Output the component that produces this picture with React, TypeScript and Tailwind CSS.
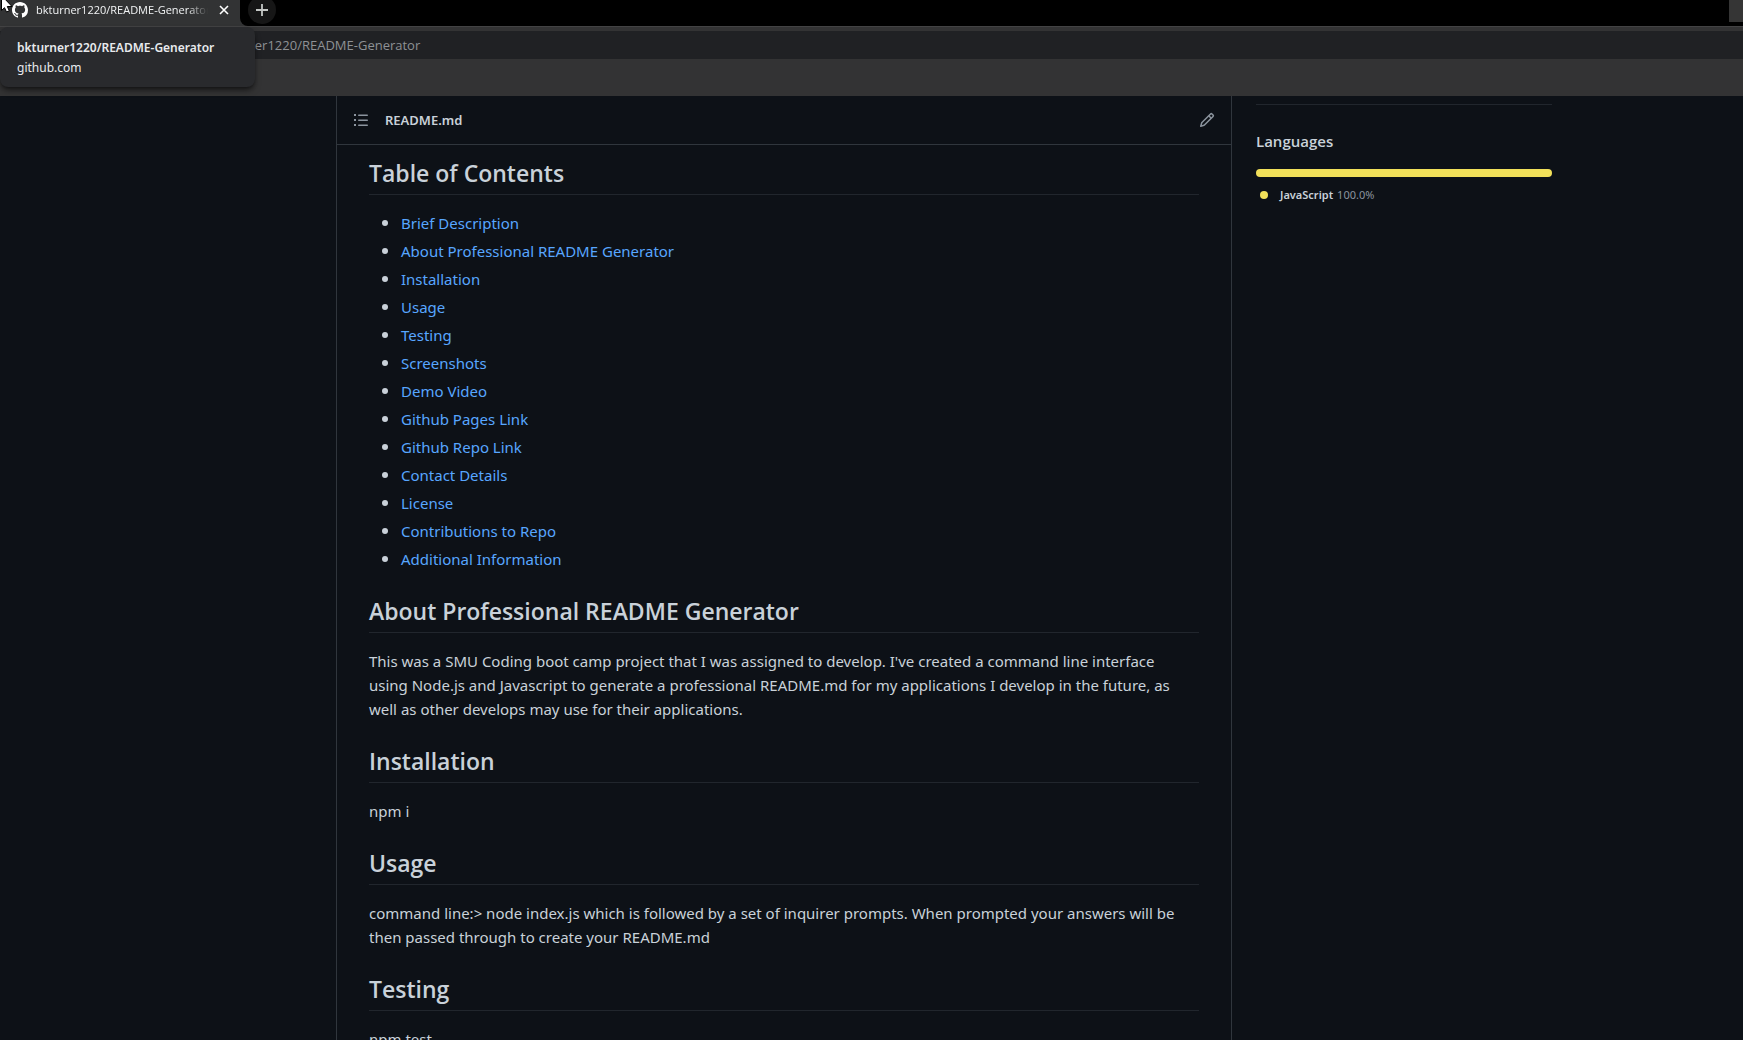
import React from 'react';

const contents = [
  'Brief Description',
  'About Professional README Generator',
  'Installation',
  'Usage',
  'Testing',
  'Screenshots',
  'Demo Video',
  'Github Pages Link',
  'Github Repo Link',
  'Contact Details',
  'License',
  'Contributions to Repo',
  'Additional Information',
];

const slug = (title: string) => title.toLowerCase().replace(/ /g, '-');

function GitHubMark() {
  return (
    <svg viewBox="0 0 16 16" className="size-4 shrink-0" fill="#fff" aria-hidden="true">
      <path d="M8 0C3.58 0 0 3.58 0 8c0 3.54 2.29 6.53 5.47 7.59.4.07.55-.17.55-.38 0-.19-.01-.82-.01-1.49-2.01.37-2.53-.49-2.69-.94-.09-.23-.48-.94-.82-1.13-.28-.15-.68-.52-.01-.53.63-.01 1.08.58 1.23.82.72 1.21 1.87.87 2.33.66.07-.52.28-.87.51-1.07-1.78-.2-3.64-.89-3.64-3.95 0-.87.31-1.59.82-2.15-.08-.2-.36-1.02.08-2.12 0 0 .67-.21 2.2.82.64-.18 1.32-.27 2-.27s1.36.09 2 .27c1.53-1.04 2.2-.82 2.2-.82.44 1.1.16 1.92.08 2.12.51.56.82 1.27.82 2.15 0 3.07-1.87 3.75-3.65 3.95.29.25.54.73.54 1.48 0 1.07-.01 1.93-.01 2.2 0 .21.15.46.55.38A8.01 8.01 0 0 0 16 8c0-4.42-3.58-8-8-8Z" />
    </svg>
  );
}

function ListIcon() {
  return (
    <svg viewBox="0 0 16 16" className="size-4" fill="currentColor" aria-hidden="true">
      <path d="M1 2h2v2H1zM1 7h2v2H1zM1 12h2v2H1z" />
      <path d="M5.75 2.5a.75.75 0 0 0 0 1.5h8.5a.75.75 0 0 0 0-1.5h-8.5Zm0 5a.75.75 0 0 0 0 1.5h8.5a.75.75 0 0 0 0-1.5h-8.5Zm0 5a.75.75 0 0 0 0 1.5h8.5a.75.75 0 0 0 0-1.5h-8.5Z" />
    </svg>
  );
}

function PencilIcon() {
  return (
    <svg viewBox="0 0 16 16" className="size-4" fill="currentColor" aria-hidden="true">
      <path d="M11.013 1.427a1.75 1.75 0 0 1 2.474 0l1.086 1.086a1.75 1.75 0 0 1 0 2.474l-8.61 8.61c-.21.21-.47.364-.756.445l-3.251.93a.75.75 0 0 1-.927-.928l.929-3.25c.081-.286.235-.547.445-.758l8.61-8.61Zm1.414 1.06a.25.25 0 0 0-.354 0L10.811 3.75l1.439 1.44 1.263-1.263a.25.25 0 0 0 0-.354l-1.086-1.086ZM11.189 6.25 9.75 4.81l-6.286 6.287a.25.25 0 0 0-.064.108l-.558 1.953 1.953-.558a.249.249 0 0 0 .108-.064l6.286-6.286Z" />
    </svg>
  );
}

function BrowserChrome() {
  return (
    <header className="relative z-10 bg-[#333334]">
      <div className="flex h-[26px] bg-[#323334]">
        <div className="flex h-[26px] w-60 items-start pl-3 pr-2">
          <div className="flex h-5 min-w-0 flex-1 items-center gap-2">
            <GitHubMark />
            <span className="min-w-0 flex-1 overflow-hidden whitespace-nowrap font-['Open_Sans'] text-[11px] text-[#f1f3f4] [mask-image:linear-gradient(to_right,black_88%,transparent)]">
              bkturner1220/README-Generator
            </span>
            <button aria-label="Close tab" className="flex size-4 items-center justify-center text-white">
              <svg viewBox="0 0 10 10" className="size-[10px]" stroke="currentColor" strokeWidth="1.6" aria-hidden="true">
                <path d="M1 1l8 8M9 1L1 9" />
              </svg>
            </button>
          </div>
        </div>
        <div className="flex flex-1 items-start justify-between rounded-bl-lg bg-black pl-2">
          <button aria-label="New tab" className="-mt-1 flex size-7 items-center justify-center rounded-full bg-[#161616] text-[#c4c7c5]">
            <svg viewBox="0 0 12 12" className="size-3" stroke="currentColor" strokeWidth="1.8" aria-hidden="true">
              <path d="M6 0v12M0 6h12" />
            </svg>
          </button>
          <span className="h-[22px] w-[14px] bg-[#353535]" />
        </div>
      </div>
      <div className="h-[70px] border-t border-[#434344] pt-1">
        <input
          aria-label="Address"
          readOnly
          defaultValue="github.com/bkturner1220/README-Generator"
          className="h-7 w-full bg-[#202124] pl-[141px] font-['Open_Sans'] text-[13px] text-[#8e9195] outline-none"
        />
      </div>
      <div role="tooltip" className="absolute left-0 top-[27px] h-[60px] w-[255px] rounded-lg bg-[#292a2d] pl-[17px] pt-[11px] text-[12px] leading-5 text-[#e8eaed] shadow-md shadow-black/50">
        <p className="font-semibold">bkturner1220/README-Generator</p>
        <p>github.com</p>
      </div>
      <svg viewBox="0 0 14 14" className="absolute left-0 top-0 size-[14px]" fill="#fff" stroke="#000" strokeWidth="1" aria-hidden="true">
        <path d="M1.500-3v13.500l3-2.800 2 4.300 2.800-1.200-2-4.300h4.700L3-3Z" />
      </svg>
    </header>
  );
}

function Heading({ children }: { children: string }) {
  return (
    <h2 id={slug(children)} className="mb-4 border-b border-[#21262d] pb-[5px] font-['Open_Sans'] text-[23px] font-semibold leading-8">
      {children}
    </h2>
  );
}

function Section({ title, children }: { title: string; children: React.ReactNode }) {
  return (
    <section className="mb-6">
      <Heading>{title}</Heading>
      {children}
    </section>
  );
}

export default function App() {
  return (
    <div className="flex h-screen flex-col overflow-hidden bg-[#0d1117] font-['Noto_Sans','Open_Sans',sans-serif] text-[#c9d1d9]">
      <BrowserChrome />
      <div className="flex min-h-0 flex-1 gap-6 pl-[336px] pr-[191px]">
        <main className="min-w-0 flex-1 overflow-hidden border-x border-[#30363d]">
          <div className="flex h-[49px] items-center border-b border-[#30363d] px-4 text-[#8b949e]">
            <button aria-label="Outline">
              <ListIcon />
            </button>
            <h1 className="ml-4 flex-1 pt-0.5 text-[13px] font-semibold text-[#c9d1d9]">README.md</h1>
            <button aria-label="Edit file">
              <PencilIcon />
            </button>
          </div>
          <article className="px-8 pt-3 text-[15px] leading-6">
            <Section title="Table of Contents">
              <ul className="list-disc space-y-1 pl-8">
                {contents.map((item) => (
                  <li key={item} className="marker:text-lg marker:leading-none">
                    <a href={`#${slug(item)}`} className="text-[#58a6ff]">
                      {item}
                    </a>
                  </li>
                ))}
              </ul>
            </Section>
            <Section title="About Professional README Generator">
              <p>
                This was a SMU Coding boot camp project that I was assigned to develop. I've created a command line interface{' '}
                <br />
                using Node.js and Javascript to generate a professional README.md for my applications I develop in the future, as{' '}
                <br />
                well as other develops may use for their applications.
              </p>
            </Section>
            <Section title="Installation">
              <p>npm i</p>
            </Section>
            <Section title="Usage">
              <p>
                command line:&gt; node index.js which is followed by a set of inquirer prompts. When prompted your answers will be{' '}
                <br />
                then passed through to create your README.md
              </p>
            </Section>
            <Section title="Testing">
              <p>npm test</p>
            </Section>
          </article>
        </main>
        <aside className="w-[296px] shrink-0 pt-2">
          <div className="border-t border-[#21262d] pt-6">
            <h2 className="mb-4 font-['Open_Sans'] text-[15px] font-semibold leading-6">Languages</h2>
            <div className="mb-2 h-2 rounded-full bg-[#f1e05a]" />
            <a href="#javascript" className="flex items-center text-[11px] leading-5">
              <span className="ml-1 mr-3 size-2 rounded-full bg-[#f1e05a]" />
              <span className="mr-1 font-semibold">JavaScript</span>
              <span className="text-[#8b949e]">100.0%</span>
            </a>
          </div>
        </aside>
      </div>
    </div>
  );
}
